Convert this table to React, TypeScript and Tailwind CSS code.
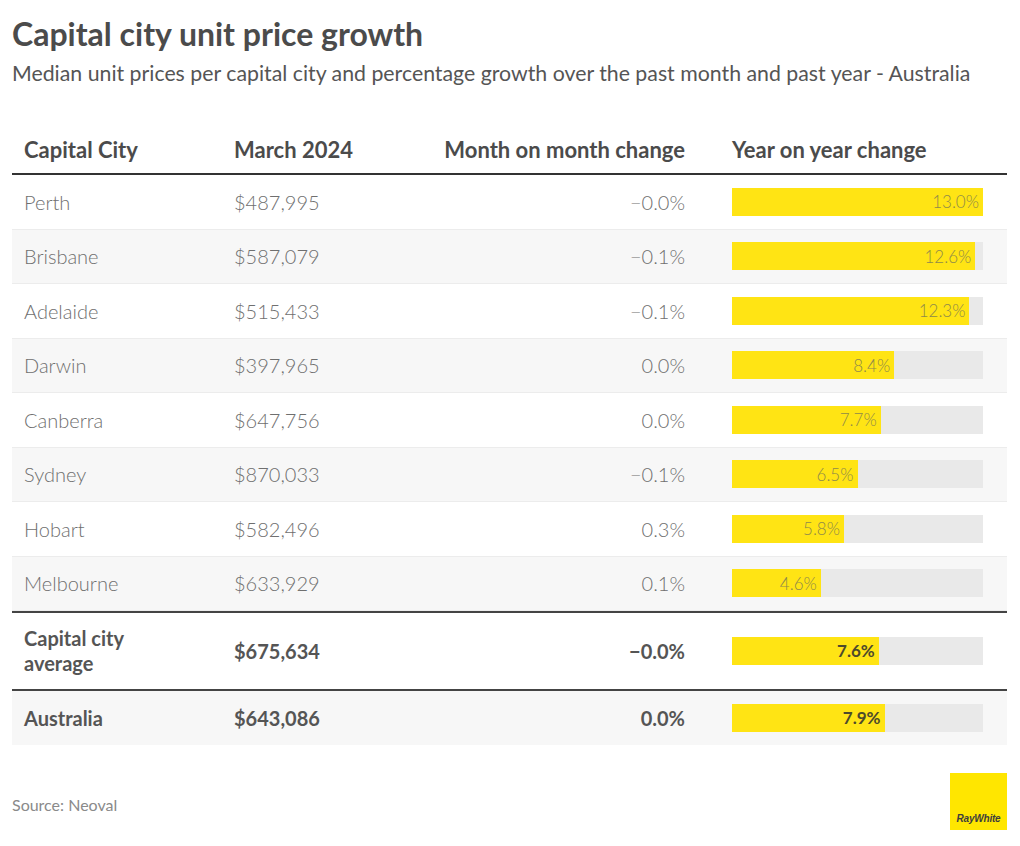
import React from 'react';

type Row = {
  city: string;
  price: string;
  mom: string;
  yoy: number;
};

const cities: Row[] = [
  { city: 'Perth', price: '$487,995', mom: '\u22120.0%', yoy: 13.0 },
  { city: 'Brisbane', price: '$587,079', mom: '\u22120.1%', yoy: 12.6 },
  { city: 'Adelaide', price: '$515,433', mom: '\u22120.1%', yoy: 12.3 },
  { city: 'Darwin', price: '$397,965', mom: '0.0%', yoy: 8.4 },
  { city: 'Canberra', price: '$647,756', mom: '0.0%', yoy: 7.7 },
  { city: 'Sydney', price: '$870,033', mom: '\u22120.1%', yoy: 6.5 },
  { city: 'Hobart', price: '$582,496', mom: '0.3%', yoy: 5.8 },
  { city: 'Melbourne', price: '$633,929', mom: '0.1%', yoy: 4.6 },
];

const MAX = 13.0;

const Bar = ({ value, bold }: { value: number; bold?: boolean }) => (
  <div className="ml-[47px] w-[251px] h-[28px] bg-[#e9e9e9]">
    <div
      className="h-full bg-[#ffe414] flex items-center justify-end pr-[4px]"
      style={{ width: `${(value / MAX) * 100}%` }}
    >
      <span
        className={
          bold
            ? 'text-[17px] font-bold text-[#4d4a2c]'
            : 'text-[17px] font-light text-[#8f8a4a]'
        }
      >
        {value.toFixed(1)}%
      </span>
    </div>
  </div>
);

export default function App() {
  return (
    <div className="w-[1020px] h-[846px] bg-white px-3 font-['Lato','Noto_Sans',sans-serif]">
      <h1 className="pt-[15px] text-[32px] leading-[38px] font-bold text-[#4b4b4b]">
        Capital city unit price growth
      </h1>
      <p className="mt-[6px] text-[21.3px] leading-[29px] text-[#555]">
        Median unit prices per capital city and percentage growth over the past month and past year - Australia
      </p>

      <div className="mt-[36px] w-[995px]">
        {/* header */}
        <div className="h-[51px] pt-[2px] flex items-center px-3 border-b-2 border-[#333] text-[22px] font-bold text-[#4b4b4b]">
          <div className="w-[210px]">Capital City</div>
          <div className="w-[160px]">March 2024</div>
          <div className="w-[291px] text-right">Month on month change</div>
          <div className="ml-[47px]">Year on year change</div>
        </div>

        {cities.map((r, i) => (
          <div
            key={r.city}
            className={
              'h-[54.5px] flex items-center px-3 border-b border-[#ececec] text-[20px] font-light text-[#6f6f6f] ' +
              (i % 2 === 1 ? 'bg-[#f7f7f7]' : 'bg-white')
            }
          >
            <div className="w-[210px]">{r.city}</div>
            <div className="w-[160px]">{r.price}</div>
            <div className="w-[291px] text-right">{r.mom}</div>
            <Bar value={r.yoy} />
          </div>
        ))}

        <div className="h-[78px] flex items-center px-3 border-t-2 border-[#444] text-[20px] font-bold text-[#555]">
          <div className="w-[210px] leading-[25px]">
            Capital city
            <br />
            average
          </div>
          <div className="w-[160px]">$675,634</div>
          <div className="w-[291px] text-right">{'\u22120.0%'}</div>
          <Bar value={7.6} bold />
        </div>

        <div className="h-[56px] flex items-center px-3 border-t-2 border-[#444] bg-[#f7f7f7] text-[20px] font-bold text-[#555]">
          <div className="w-[210px]">Australia</div>
          <div className="w-[160px]">$643,086</div>
          <div className="w-[291px] text-right">0.0%</div>
          <Bar value={7.9} bold />
        </div>
      </div>

      <div className="mt-[28px] flex items-start justify-between w-[995px]">
        <div className="mt-[20px] text-[16px] text-[#8a8a8a]">Source: Neoval</div>
        <div className="w-[57px] h-[57px] bg-[#ffe600] flex items-end justify-center pb-[6px]">
          <span className="text-[10px] leading-none font-black italic text-[#3d3d3d] tracking-[-0.2px] font-['Liberation_Sans',sans-serif]">
            RayWhite
          </span>
        </div>
      </div>
    </div>
  );
}
